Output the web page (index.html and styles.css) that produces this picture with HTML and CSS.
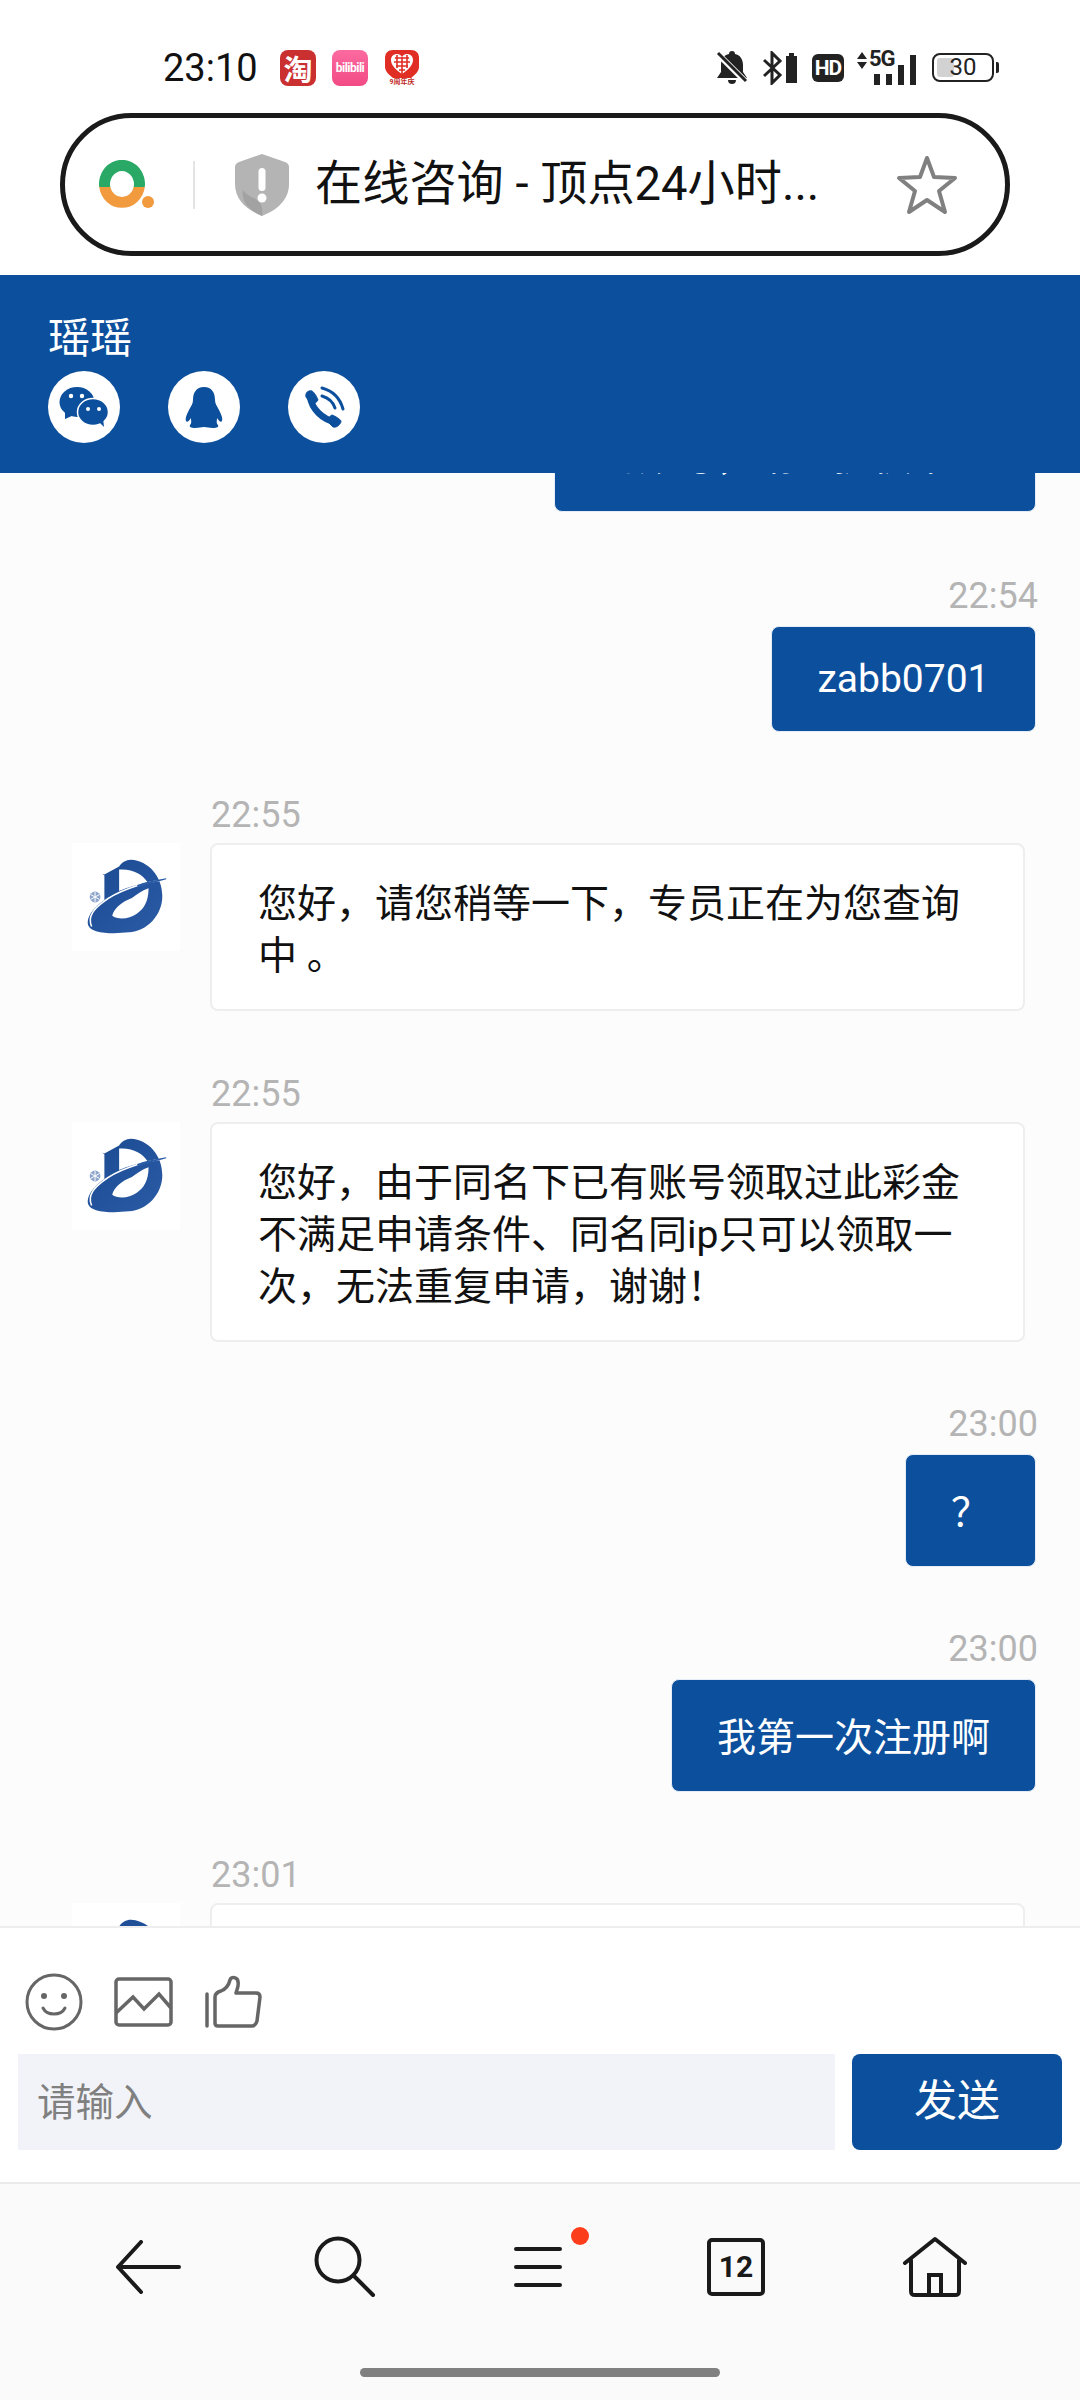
FILE: index.html
```html
<!DOCTYPE html>
<html>
	<head>
		<meta charset="utf-8" />
		<meta name="viewport" content="width=device-width" />
		<title>在线咨询</title>
		<link rel="stylesheet" href="styles.css">
	</head>
	<body>
		<svg class="defs" width="0" height="0">
			<defs>
				<linearGradient id="logo-blue" x1="0" y1="0" x2="1" y2="1">
					<stop offset="0" stop-color="#1b4a92" />
					<stop offset="1" stop-color="#2a5ba5" />
				</linearGradient>
				<symbol id="logo" viewBox="0 0 105 110">
					<circle cx="21.5" cy="55" r="5.5" fill="#8ea6cc" />
					<path d="M21.5 50V60M17 52.5L26 57.5M17 57.5L26 52.5" stroke="#fff" stroke-width="1" />
					<path d="M29 31L31 32L46 24C48 20 53 17 58 17C76 18 90 34 90 54C90 74 74 90 56 91L41 92C28 92 14 90 14 81C14 72 24 63 31 58L31 33Z" fill="url(#logo-blue)" />
					<path d="M46 27C60 26 70 32 75 40C66 42 55 45 46 49Z" fill="#fff" />
					<path d="M59 56C48 60 40 68 39 74C44 78 56 78 64 72C71 67 76 60 76 46C70 48 64 52 59 56Z" fill="#fff" />
					<path d="M94 37C66 41 42 50 30 60C22 66 13 74 18 85" fill="none" stroke="#fff" stroke-width="1.6" />
					<path d="M94 36C82 38 72 40 64 43L66 45C76 42 86 39 94 37Z" fill="#2a5ba5" />
				</symbol>
			</defs>
		</svg>

		<div class="phone">
			<div class="status-bar">
				<span class="clock">23:10</span>
				<span class="app-tile tile-taobao">淘</span>
				<span class="app-tile tile-bili">bilibili</span>
				<svg class="app-pdd" width="36" height="36" viewBox="0 0 36 36">
					<path d="M9 1H27C32 1 35 4 35 9V18C35 22 31 26 27 29H9C5 26 1 22 1 18V9C1 4 4 1 9 1Z" fill="#e02e24" />
					<path d="M18 25C11 20 7 16 7 11C7 7 10 5 13 5C15 5 17 6 18 8C19 6 21 5 23 5C26 5 29 7 29 11C29 16 25 20 18 25Z" fill="#fff" />
					<path d="M11 9H25M10 13H26M12 17H24M15 21H21M13 6V19M18 8V25M23 6V19" stroke="#e02e24" stroke-width="1.6" />
					<text x="18" y="35" class="pdd-label">9周年庆</text>
				</svg>
				<div class="status-right">
					<svg class="icon-bell" width="32" height="34" viewBox="0 0 32 34">
						<path d="M16 0C18 0 19 1 19 3C24 4 27 8 27 14V21L31 27H1L5 21V14C5 8 8 4 13 3C13 1 14 0 16 0ZM12 29H20C20 32 18 33 16 33C14 33 12 32 12 29Z" fill="#222" />
						<path d="M2 3L30 31" stroke="#fff" stroke-width="6" />
						<path d="M2 2L30 30" stroke="#222" stroke-width="3" />
					</svg>
					<svg class="icon-bt" width="34" height="34" viewBox="0 0 34 34">
						<path d="M1 9L17 24L9 32V2L17 10L1 25" fill="none" stroke="#222" stroke-width="3" />
						<path d="M23 5H34V32H23Z" fill="#222" />
						<path d="M26 2H31V5H26Z" fill="#222" />
					</svg>
					<span class="hd-badge">HD</span>
					<div class="signal">
						<svg width="12" height="20" viewBox="0 0 12 20">
							<path d="M6 1L11 8H1ZM1 11H11L6 18Z" fill="#222" />
						</svg>
						<span class="signal-5g">5G</span>
						<div class="signal-bars">
							<i class="bar-1"></i><i class="bar-2"></i><i class="bar-3"></i><i class="bar-4"></i>
						</div>
					</div>
					<div class="battery">
						<div class="battery-level" style="width: 30%"></div>
						<span class="battery-num">30</span>
					</div>
					<span class="battery-tip"></span>
				</div>
			</div>

			<div class="address-wrap">
				<div class="address-bar">
					<svg class="browser-logo" width="56" height="50" viewBox="0 0 56 50">
						<path d="M.2 27A23 24 0 1 1 45.8 27H34.7A12 13 0 1 0 11.3 27Z" fill="#2aa866" />
						<path d="M.2 27A23 24 0 0 0 45.8 27H34.7A12 13 0 0 1 11.3 27Z" fill="#f19a3e" />
						<circle cx="49" cy="42" r="6" fill="#f19a3e" />
					</svg>
					<span class="address-sep"></span>
					<svg class="shield" width="54" height="62" viewBox="0 0 54 62">
						<path d="M27 0L50 8C53 9 54 11 54 13V30C54 46 42 56 27 62C12 56 0 46 0 30V13C0 11 1 9 4 8Z" fill="#b4b4b4" />
						<path d="M27 62C14 56 6 48 8 36C14 46 30 42 27 62Z" fill="#a2a2a2" />
						<rect x="23.5" y="14" width="7" height="23" rx="3.5" fill="#fff" />
						<circle cx="27" cy="44" r="4.5" fill="#fff" />
					</svg>
					<span class="address-title">在线咨询 - 顶点24小时...</span>
					<svg class="star" width="64" height="62" viewBox="0 0 64 62">
						<path d="M32 4L39 23L60 24L44 37L50 58L32 46L14 58L20 37L4 24L25 23Z" fill="none" stroke="#808080" stroke-width="4" stroke-linejoin="round" />
					</svg>
				</div>
			</div>

			<div class="chat-head">
				<div class="agent-name">瑶瑶</div>
				<div class="contact-row">
					<span class="contact-btn">
						<svg width="72" height="72" viewBox="0 0 72 72">
							<ellipse cx="29" cy="31" rx="17.5" ry="15" fill="#0c4f9c" />
							<path d="M17 41L17 48L26 44Z" fill="#0c4f9c" />
							<ellipse cx="45" cy="41" rx="15.5" ry="13.5" fill="#0c4f9c" stroke="#fff" stroke-width="1.5" />
							<path d="M51 51L56 56L55 47Z" fill="#0c4f9c" />
							<circle cx="23" cy="25" r="2.2" fill="#fff" />
							<circle cx="34" cy="25" r="2.2" fill="#fff" />
							<circle cx="40" cy="38" r="2" fill="#fff" />
							<circle cx="51" cy="38" r="2" fill="#fff" />
						</svg>
					</span>
					<span class="contact-btn">
						<svg width="72" height="72" viewBox="0 0 72 72">
							<path d="M36 16C28 16 25 22 25 29C25 33 23 35 21 39C19 43 17 47 18 50C19 52 21 50 23 47C23 50 24 52 22 54C21 56 23 57 27 57C31 57 33 56 36 56C39 56 41 57 45 57C49 57 51 56 50 54C48 52 49 50 49 47C51 50 53 52 54 50C55 47 53 43 51 39C49 35 47 33 47 29C47 22 44 16 36 16Z" fill="#0c4f9c" />
						</svg>
					</span>
					<span class="contact-btn">
						<svg width="72" height="72" viewBox="0 0 72 72">
							<path d="M22 26C24 38 34 48 47 51" fill="none" stroke="#0c4f9c" stroke-width="6.5" />
							<path d="M18 26C17 22 20 19 24 20C26 21 29 26 30 29C29 31 25 34 24 34ZM38 49C41 47 43 44 44 44C47 45 52 48 53 50C53 53 49 57 45 56Z" fill="#0c4f9c" stroke="#0c4f9c" stroke-width="1" />
							<path d="M34 17C45 20 52 27 55 38" fill="none" stroke="#0c4f9c" stroke-width="3" stroke-linecap="round" />
							<path d="M34 25C41 27 45 31 47 37" fill="none" stroke="#0c4f9c" stroke-width="3" stroke-linecap="round" />
						</svg>
					</span>
				</div>
			</div>

			<div class="chat-list">
				<div class="msg msg-sent msg-cut">
					<div class="bubble">的账号，请您提供下。</div>
				</div>
				<div class="msg msg-sent">
					<div class="msg-time">22:54</div>
					<div class="bubble bubble-latin">zabb0701</div>
				</div>
				<div class="msg msg-recv">
					<div class="msg-time">22:55</div>
					<div class="recv-row">
						<div class="avatar"><svg width="105" height="108"><use href="#logo" /></svg></div>
						<div class="bubble">您好，请您稍等一下，专员正在为您查询中 。</div>
					</div>
				</div>
				<div class="msg msg-recv">
					<div class="msg-time">22:55</div>
					<div class="recv-row">
						<div class="avatar"><svg width="105" height="108"><use href="#logo" /></svg></div>
						<div class="bubble">您好，由于同名下已有账号领取过此彩金不满足申请条件、同名同ip只可以领取一次，无法重复申请，谢谢！</div>
					</div>
				</div>
				<div class="msg msg-sent">
					<div class="msg-time">23:00</div>
					<div class="bubble">？</div>
				</div>
				<div class="msg msg-sent">
					<div class="msg-time">23:00</div>
					<div class="bubble">我第一次注册啊</div>
				</div>
				<div class="msg msg-recv">
					<div class="msg-time">23:01</div>
					<div class="recv-row">
						<div class="avatar"><svg width="105" height="108"><use href="#logo" /></svg></div>
						<div class="bubble bubble-empty"></div>
					</div>
				</div>
			</div>

			<div class="composer">
				<div class="tool-row">
					<svg width="60" height="60" viewBox="0 0 60 60">
						<circle cx="30" cy="30" r="27" fill="none" stroke="#666" stroke-width="3" />
						<circle cx="20" cy="24" r="3" fill="#666" />
						<circle cx="40" cy="24" r="3" fill="#666" />
						<path d="M19 36C23 44 37 44 41 36" fill="none" stroke="#666" stroke-width="3" stroke-linecap="round" />
					</svg>
					<svg width="60" height="52" viewBox="0 0 60 52">
						<rect x="2" y="3" width="55" height="46" rx="3" fill="none" stroke="#666" stroke-width="3.5" />
						<path d="M2 37L19 21L30 33L45 18L57 32" fill="none" stroke="#666" stroke-width="3.5" />
					</svg>
					<svg width="60" height="54" viewBox="0 0 60 54">
						<path d="M3 19V51" stroke="#666" stroke-width="3.5" stroke-linecap="round" />
						<path d="M11 22C11 18 14 17 17 16C22 14 25 9 26 5C27 1 34 2 34 7C35 11 33 14 32 18H52C55 18 56 20 56 22L53 46C52 49 51 51 48 51H14C12 51 11 50 11 48Z" fill="none" stroke="#666" stroke-width="3.5" stroke-linejoin="round" />
					</svg>
				</div>
				<div class="send-row">
					<div class="send-input">请输入</div>
					<div class="send-btn">发送</div>
				</div>
			</div>

			<div class="nav-bar">
				<div class="nav-icons">
					<svg class="nav-back" width="66" height="54" viewBox="0 0 66 54">
						<path d="M64 27H3M26 2L3 27L26 52" fill="none" stroke="#1a1a1a" stroke-width="4" stroke-linecap="round" stroke-linejoin="round" />
					</svg>
					<svg class="nav-search" width="62" height="62" viewBox="0 0 62 62">
						<circle cx="24" cy="24" r="21.5" fill="none" stroke="#1a1a1a" stroke-width="4" />
						<path d="M40 40L59 59" stroke="#1a1a1a" stroke-width="4" stroke-linecap="round" />
					</svg>
					<div class="nav-menu">
						<svg width="48" height="42" viewBox="0 0 48 42">
							<path d="M2 3H46M2 21H46M2 39H46" stroke="#1a1a1a" stroke-width="4" stroke-linecap="round" />
						</svg>
						<span class="nav-dot"></span>
					</div>
					<div class="nav-tabs">12</div>
					<svg class="nav-home" width="66" height="62" viewBox="0 0 66 62">
						<path d="M3 27L33 3L63 27M9 24V55C9 58 10 59 13 59H53C56 59 57 58 57 55V24" fill="none" stroke="#1a1a1a" stroke-width="4" stroke-linecap="round" stroke-linejoin="round" />
						<path d="M27 59V39H39V59" fill="none" stroke="#1a1a1a" stroke-width="4" />
					</svg>
				</div>
				<div class="home-indicator"></div>
			</div>
		</div>
	</body>
</html>
```

FILE: styles.css
```css
html, body {
	margin: 0;
	padding: 0;
}
body {
	width: 1080px;
	height: 2400px;
	overflow: hidden;
	background: #fff;
	font-family: Roboto, "Noto Sans CJK SC", sans-serif;
}
.defs {
	display: block;
	height: 0;
}
.phone {
	display: flex;
	flex-direction: column;
	height: 2400px;
}

/* status bar */
.status-bar {
	display: flex;
	align-items: center;
	height: 100px;
	padding: 35px 81px 0 163px;
	box-sizing: border-box;
	flex: none;
}
.clock {
	font-size: 38px;
	color: #111;
	margin-right: 21px;
	width: 96px;
}
.app-tile {
	display: flex;
	align-items: center;
	justify-content: center;
	width: 36px;
	height: 36px;
	border-radius: 8px;
	color: #fff;
	margin-right: 16px;
}
.tile-taobao {
	background: #c9302f;
	font-size: 29px;
	font-weight: 700;
}
.tile-bili {
	background: linear-gradient(#fb6ba0, #f24a84);
	font-size: 12px;
	font-weight: 700;
	letter-spacing: -0.5px;
}
.app-pdd {
	margin-top: -2px;
}
.pdd-label {
	font-size: 7px;
	font-weight: 700;
	fill: #c0281f;
	text-anchor: middle;
}
.status-right {
	display: flex;
	align-items: center;
	margin-left: auto;
}
.icon-bt {
	margin-left: 15px;
}
.hd-badge {
	background: #222;
	color: #fff;
	border-radius: 6px;
	font-size: 21px;
	font-weight: 700;
	width: 32px;
	height: 28px;
	line-height: 28px;
	text-align: center;
	letter-spacing: -1px;
	margin-left: 15px;
}
.signal {
	display: flex;
	position: relative;
	width: 60px;
	height: 34px;
	margin-left: 12px;
}
.signal svg {
	position: absolute;
	left: 0;
	top: 0;
}
.signal-5g {
	position: absolute;
	left: 13px;
	top: -5px;
	font-size: 22px;
	font-weight: 700;
	letter-spacing: -1px;
	color: #222;
}
.signal-bars {
	position: absolute;
	right: 0;
	bottom: 0;
	display: flex;
	align-items: flex-end;
	gap: 6px;
}
.signal-bars i {
	display: block;
	width: 6px;
	background: #222;
}
.bar-1 { height: 11px; }
.bar-2 { height: 11px; }
.bar-3 { height: 20px; }
.bar-4 { height: 30px; }
.battery {
	position: relative;
	width: 62px;
	height: 29px;
	border: 2px solid #222;
	border-radius: 8px;
	box-sizing: border-box;
	overflow: hidden;
	margin-left: 16px;
}
.battery-level {
	position: absolute;
	left: 3px;
	top: 3px;
	bottom: 3px;
	background: #d2d2d2;
	border-radius: 3px;
}
.battery-num {
	position: relative;
	display: block;
	text-align: center;
	font-size: 24px;
	line-height: 25px;
	color: #222;
}
.battery-tip {
	width: 3px;
	height: 11px;
	background: #222;
	margin-left: 2px;
	border-radius: 0 2px 2px 0;
}

/* address bar */
.address-wrap {
	flex: none;
	height: 175px;
	padding: 13px 70px 0 60px;
	box-sizing: border-box;
}
.address-bar {
	display: flex;
	align-items: center;
	height: 143px;
	border: 5px solid #1a1a1a;
	border-radius: 72px;
	box-sizing: border-box;
	padding-left: 34px;
}
.browser-logo {
	flex: none;
}
.address-sep {
	width: 2px;
	height: 48px;
	background: #e4e4e4;
	margin: 0 40px 0 38px;
}
.shield {
	flex: none;
}
.address-title {
	font-size: 47.2px;
	line-height: 60px;
	color: #111;
	margin: -1px 0 0 26px;
	width: 580px;
	white-space: nowrap;
}
.star {
	flex: none;
}

/* agent header */
.chat-head {
	flex: none;
	height: 198px;
	background: #0c4f9c;
	padding: 37px 0 0 48px;
	box-sizing: border-box;
}
.agent-name {
	color: #fff;
	font-size: 42px;
	line-height: 54px;
}
.contact-row {
	display: flex;
	gap: 48px;
	margin-top: 5px;
}
.contact-btn {
	display: block;
	width: 72px;
	height: 72px;
	border-radius: 50%;
	background: #fff;
}
.contact-btn svg {
	display: block;
}

/* message list */
.chat-list {
	flex: 1;
	min-height: 0;
	overflow: hidden;
	background: #fcfcfc;
}
.msg {
	margin-top: 56px;
}
.msg-time {
	font-size: 36px;
	line-height: 56px;
	color: #b4b4b4;
}
.bubble {
	font-size: 39px;
	line-height: 52px;
	border-radius: 8px;
	box-sizing: border-box;
}
.msg-sent {
	display: flex;
	flex-direction: column;
	align-items: flex-end;
	padding-right: 44px;
}
.msg-sent .msg-time {
	margin-right: -2px;
	line-height: 52px;
	margin-bottom: 4px;
}
.msg-sent .bubble {
	background: #0c4f9c;
	color: #fff;
	border: 1px solid #e4ecf5;
	padding: 32px 45px 27px;
}
.msg-sent .bubble-latin {
	line-height: 46px;
	padding: 29px 45.5px;
}
/* top message scrolled under the header, only its last line pokes out */
.msg-cut {
	margin-top: -74px;
	margin-bottom: 58px;
}
.msg-sent.msg-cut .bubble {
	padding: 31px 45px 28px;
}
.msg-recv {
	margin-top: 55px;
}
.msg-recv .msg-time {
	margin-left: 211px;
}
.recv-row {
	display: flex;
	align-items: flex-start;
	padding: 0 55px 0 72px;
}
.avatar {
	flex: none;
	width: 108px;
	height: 108px;
	background: #fff;
	margin-right: 30px;
}
.avatar svg {
	display: block;
	margin-left: 1px;
}
.msg-recv .bubble {
	flex: 1;
	background: #fff;
	color: #111;
	border: 2px solid #eee;
	padding: 33px 46px 27px;
}
.msg-recv .bubble-empty {
	min-height: 168px;
}

/* input area */
.composer {
	flex: none;
	height: 256px;
	background: #fff;
	border-top: 2px solid #eee;
	box-sizing: border-box;
	padding: 46px 18px 0;
}
.tool-row {
	display: flex;
	align-items: center;
	gap: 30px;
	height: 56px;
	padding-left: 6px;
}
.send-row {
	display: flex;
	gap: 17px;
	margin-top: 24px;
}
.send-input {
	flex: 1;
	height: 96px;
	line-height: 98px;
	padding-left: 19px;
	background: #f1f3f8;
	color: #808080;
	font-size: 38.5px;
}
.send-btn {
	width: 210px;
	height: 96px;
	line-height: 94px;
	border-radius: 8px;
	background: #0c4f9c;
	color: #fff;
	font-size: 43px;
	text-align: center;
}

/* browser bottom bar */
.nav-bar {
	flex: none;
	height: 218px;
	background: #fafafa;
	border-top: 2px solid #eaeaea;
	box-sizing: border-box;
}
.nav-icons {
	display: flex;
	align-items: center;
	height: 62px;
	margin-top: 52px;
	padding-left: 115px;
}
.nav-search {
	margin-left: 133px;
}
.nav-menu {
	position: relative;
	width: 48px;
	height: 42px;
	margin-left: 138px;
}
.nav-menu svg {
	display: block;
}
.nav-dot {
	position: absolute;
	right: -27px;
	top: -19px;
	width: 18px;
	height: 18px;
	border-radius: 50%;
	background: #fb3d1c;
}
.nav-tabs {
	width: 58px;
	height: 58px;
	margin-left: 145px;
	border: 4px solid #1a1a1a;
	border-radius: 5px;
	box-sizing: border-box;
	font-size: 30px;
	font-weight: 700;
	line-height: 50px;
	text-align: center;
	color: #1a1a1a;
}
.nav-home {
	margin-left: 137px;
}
.home-indicator {
	width: 360px;
	height: 9px;
	border-radius: 5px;
	background: #808080;
	margin: 70px auto 0;
}
```
